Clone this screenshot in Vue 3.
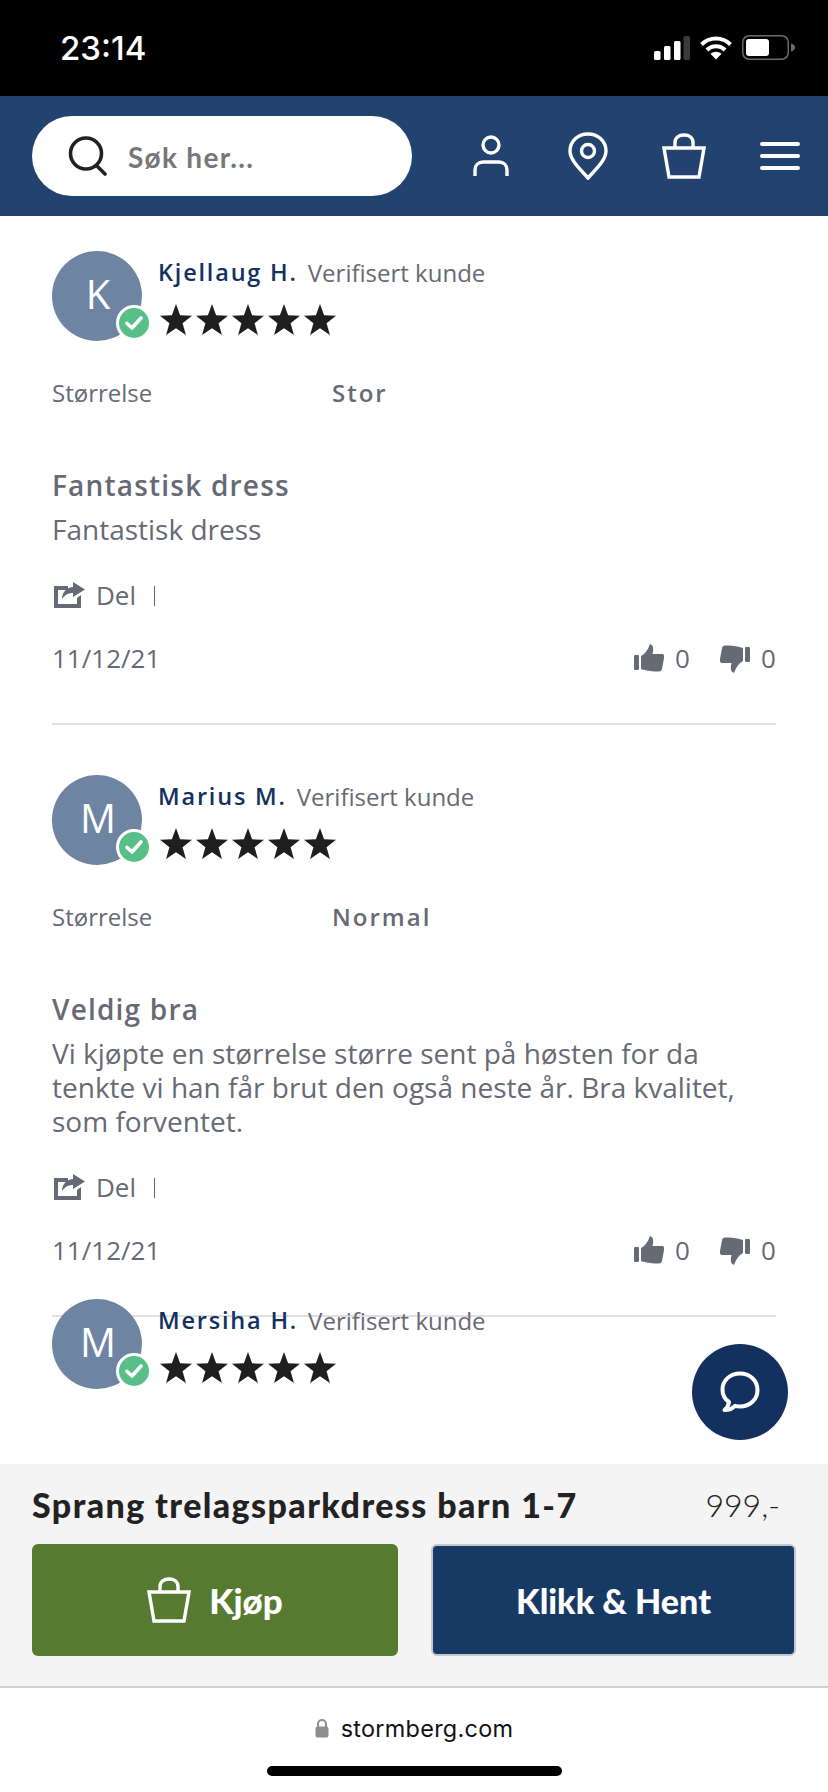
<script setup>
const reviews = [
  { initial: 'K', name: 'Kjellaug H.', size: 'Stor', title: 'Fantastisk dress', lines: ['Fantastisk dress'], full: true },
  { initial: 'M', name: 'Marius M.', size: 'Normal', title: 'Veldig bra', lines: ['Vi kjøpte en størrelse større sent på høsten for da', 'tenkte vi han får brut den også neste år. Bra kvalitet,', 'som forventet.'], full: true },
  { initial: 'M', name: 'Mersiha H.', full: false },
]
</script>

<template>
  <div class="phone">
    <header class="status">
      <span class="time">23:14</span>
      <div class="status-icons">
        <svg width="36" height="24" viewBox="0 0 36 24">
          <rect x="0" y="15" width="6.500" height="9" rx="1.500" fill="#fff" />
          <rect x="10" y="10" width="6.500" height="14" rx="1.500" fill="#fff" />
          <rect x="20" y="5" width="6.500" height="19" rx="1.500" fill="#fff" />
          <rect x="29.500" y="0" width="6.500" height="24" rx="1.500" fill="#3a3a3a" />
        </svg>
        <svg width="32" height="24" viewBox="0 0 32 24" fill="none" stroke="#fff" stroke-width="4">
          <path d="M1.500 8.500C9.500 .5 22.500 .5 30.500 8.500" />
          <path d="M7 14c5-5 13-5 18 0" />
          <path d="M16 23.500l-5.600-5.800c3.200-2.700 8-2.700 11.200 0z" fill="#fff" stroke="none" />
        </svg>
        <svg width="54" height="25" viewBox="0 0 54 25">
          <rect x=".75" y=".75" width="45.500" height="23.500" rx="6.500" fill="none" stroke="#6b6b6b" stroke-width="1.500" />
          <rect x="4" y="4" width="23" height="17" rx="3" fill="#fff" />
          <path d="M49 8.500c2.500.6 4 2 4 4s-1.500 3.400-4 4z" fill="#6b6b6b" />
        </svg>
      </div>
    </header>

    <nav class="nav">
      <div class="search">
        <svg class="search-icon" width="40" height="40" viewBox="0 0 40 40" fill="none" stroke="#222" stroke-width="3.600" stroke-linecap="round">
          <circle cx="18" cy="17.500" r="15.500" />
          <path d="M28.500 29.500l8.500 8.500" />
        </svg>
        <span class="search-text">Søk her...</span>
      </div>
      <div class="nav-icons">
        <svg class="person" width="36" height="42" viewBox="0 0 36 42" fill="none" stroke="#fff" stroke-width="3.400">
          <circle cx="18" cy="10" r="8" />
          <path d="M2 41V35c0-5 3.500-8 8-8h16c4.500 0 8 3 8 8v6" />
        </svg>
        <svg width="40" height="48" viewBox="0 0 40 48" fill="none" stroke="#fff" stroke-width="3.400">
          <path d="M20 46C12 37 2 28 2 19 2 9 10 2 20 2s18 7 18 17c0 9-10 18-18 27z" />
          <circle cx="20" cy="19" r="6.500" />
        </svg>
        <svg width="44" height="46" viewBox="0 0 44 46" fill="none" stroke="#fff" stroke-width="3.400">
          <path d="M13 15V9.500C13 5 16.500 2 22 2s9 3 9 7.500V15" />
          <path d="M2 15h40l-5 29H7z" />
        </svg>
        <div class="burger"><i></i><i></i><i></i></div>
      </div>
    </nav>

    <main class="reviews">
      <article v-for="(r, ri) in reviews" :key="ri" class="review">
        <div class="head">
          <div class="avatar">
            {{ r.initial }}
            <span class="badge">
              <svg width="20" height="16" viewBox="0 0 20 16" fill="none" stroke="#fff" stroke-width="3.600" stroke-linecap="round" stroke-linejoin="round">
                <path d="M3 8.500l5 4.500L17 3" />
              </svg>
            </span>
          </div>
          <div class="who">
            <div class="name-row">
              <span class="name">{{ r.name }}</span>
              <span class="verified">Verifisert kunde</span>
            </div>
            <div class="stars">
              <svg v-for="n in 5" :key="n" width="32" height="31" viewBox="0 0 32 31">
                <path d="M16 0l4.100 11.300L32 11.800l-9.400 7.400L25.900 31 16 24.200 6.100 31l3.300-11.800L0 11.800l11.900-.5z" fill="#1f1f1f" />
              </svg>
            </div>
          </div>
        </div>
        <template v-if="r.full">
          <div class="meta">
            <span class="meta-label">Størrelse</span>
            <span class="meta-value">{{ r.size }}</span>
          </div>
          <h3 class="title">{{ r.title }}</h3>
          <p class="body"><span v-for="(l, i) in r.lines" :key="i" class="line">{{ l }}</span></p>
          <div class="share">
            <svg width="31" height="26" viewBox="0 0 31 26">
              <path d="M0 4h14v4H4v14h19v-6l4-3v13H0z" fill="#666a75" />
              <path d="M19 0l12 7.500L19 15v-4c-5 0-8 2-11 6 0-7 5-11.500 11-12z" fill="#666a75" />
            </svg>
            <span class="del">Del</span>
            <span class="sep"></span>
          </div>
          <div class="foot">
            <span>11/12/21</span>
            <div class="votes">
              <svg width="30" height="28" viewBox="0 0 30 28" fill="#666a75">
                <rect x="0" y="11" width="5" height="15" rx="1" />
                <path d="M7 12c4-2 7-6 9-12 3 1 4 4 2.500 10H28c2 0 2.500 2 2 4l-2 11c-.4 1.500-1.500 2.500-3 2.500-6 0-12-.5-18-2.500z" />
              </svg>
              <span class="count">0</span>
              <svg class="down" width="30" height="28" viewBox="0 0 30 28" fill="#666a75">
                <rect x="25" y="2" width="5" height="15" rx="1" />
                <path d="M23 16c-4 2-7 6-9 12-3-1-4-4-2.500-10H2c-2 0-2.500-2-2-4L2 3C2.400 1.500 3.500.5 5 .5c6 0 12 .5 18 2.500z" />
              </svg>
              <span class="count">0</span>
            </div>
          </div>
          <hr class="rule" />
        </template>
      </article>
    </main>

    <button class="chat" aria-label="Chat">
      <svg width="40" height="42" viewBox="0 0 40 42" fill="none" stroke="#fff" stroke-width="4" stroke-linecap="round" stroke-linejoin="round">
        <path d="M9 31C4.500 28 2.500 23.500 2.500 18.500 2.500 9.500 10 2.500 20 2.500s17.500 7 17.500 16.500S30 35.500 20 35.500c-2 0-3.500-.2-5-.7C12.500 37.500 9 39 4.500 39 7 37 8.500 34.500 9 31z" />
      </svg>
    </button>

    <section class="buy">
      <div class="product">
        <span class="product-name">Sprang trelagsparkdress barn 1-7</span>
        <span class="price">999,-</span>
      </div>
      <div class="actions">
        <button class="btn green">
          <svg width="44" height="46" viewBox="0 0 44 46" fill="none" stroke="#fff" stroke-width="3.400">
            <path d="M13 15V9.500C13 5 16.500 2 22 2s9 3 9 7.500V15" />
            <path d="M2 15h40l-5 29H7z" />
          </svg>
          Kjøp
        </button>
        <button class="btn blue">Klikk &amp; Hent</button>
      </div>
    </section>

    <footer class="browser">
      <div class="url">
        <svg width="14" height="19" viewBox="0 0 14 19">
          <path d="M3 8V5a4 4 0 0 1 8 0v3" fill="none" stroke="#8e8e8e" stroke-width="2" />
          <rect x="0.500" y="7.500" width="13" height="11" rx="2" fill="#8e8e8e" />
        </svg>
        <span>stormberg.com</span>
      </div>
      <div class="home"></div>
    </footer>
  </div>
</template>

<style>
html, body { margin: 0; background: #fff; }
</style>

<style scoped>
.phone {
  position: relative;
  width: 828px;
  height: 1792px;
  overflow: hidden;
  display: flex;
  flex-direction: column;
  background: #fff;
  font-family: "Open Sans", sans-serif;
  color: #666a75;
}
.status {
  flex: none;
  height: 96px;
  background: #000;
  display: flex;
  align-items: center;
  justify-content: space-between;
  padding: 0 32px 0 60px;
  box-sizing: border-box;
}
.time {
  font-family: Inter, sans-serif;
  font-weight: 500;
  font-size: 33px;
  color: #fff;
}
.status-icons { display: flex; align-items: center; gap: 10px; margin-top: -1px; }
.status-icons svg { display: block; }
.nav {
  flex: none;
  height: 120px;
  background: #22426f;
  display: flex;
  align-items: center;
  padding: 0 28px 0 32px;
  box-sizing: border-box;
  justify-content: space-between;
}
.search {
  width: 380px;
  height: 80px;
  border-radius: 40px;
  background: #fff;
  display: flex;
  align-items: center;
  padding-left: 36px;
  box-sizing: border-box;
}
.search-icon { flex: none; }
.search-text {
  margin-left: 20px;
  margin-top: 2px;
  font-family: Lato, sans-serif;
  font-weight: 700;
  font-size: 28px;
  letter-spacing: 1.300px;
  color: #777;
}
.nav-icons { display: flex; align-items: center; gap: 54px; }
.nav-icons svg { display: block; }
.person { margin-right: 5px; }
.burger { width: 40px; display: flex; flex-direction: column; gap: 8px; }
.burger i { display: block; height: 4px; border-radius: 2px; background: #fff; }
.reviews {
  flex: 1;
  min-height: 0;
  overflow: hidden;
  padding: 35px 52px 0;
  box-sizing: border-box;
}
.review { height: 524px; }
.head { display: flex; height: 90px; }
.avatar {
  position: relative;
  width: 90px;
  height: 90px;
  border-radius: 50%;
  background: #6e84a3;
  color: #fff;
  font-size: 40px;
  line-height: 86px;
  text-indent: 2px;
  text-align: center;
  flex: none;
}
.badge {
  position: absolute;
  left: 64px;
  top: 54px;
  width: 30px;
  height: 30px;
  border: 3px solid #fff;
  border-radius: 50%;
  background: #58bf88;
  display: flex;
  align-items: center;
  justify-content: center;
  text-indent: 0;
}
.who { margin-left: 16px; padding-top: 4px; }
.name-row { display: flex; align-items: center; height: 34px; }
.name {
  font-weight: 600;
  font-size: 23.500px;
  letter-spacing: 1.800px;
  color: #13315f;
}
.verified { margin-left: 10px; font-size: 24px; color: #666a75; }
.stars { display: flex; gap: 4px; margin-top: 15px; margin-left: 2px; }
.stars svg { display: block; }
.meta { display: flex; margin-top: 34px; height: 34px; align-items: center; font-size: 24px; }
.meta-label { width: 280px; }
.meta-value { font-weight: 600; letter-spacing: 2px; }
.title {
  margin: 59px 0 0;
  font-size: 28px;
  line-height: 34px;
  font-weight: 600;
  letter-spacing: 1.200px;
  color: #666a75;
}
.body { margin: 10px 0 0; font-size: 28px; line-height: 34px; }
.line { display: block; white-space: nowrap; }
.share { display: flex; align-items: center; margin-top: 32px; height: 34px; padding-left: 2px; }
.share svg { display: block; }
.del { margin-left: 11px; font-size: 26px; }
.sep { margin-left: 18px; width: 1px; height: 20px; background: #666a75; margin-top: 2px; }
.foot { display: flex; justify-content: space-between; align-items: center; margin-top: 29px; height: 34px; font-size: 26px; }
.votes { display: flex; align-items: center; }
.votes svg { display: block; }
.count { margin-left: 11px; width: 15px; font-size: 26px; }
.down { margin-left: 30px; margin-top: 2px; }
.rule { margin: 48px 0 0; border: 0; height: 2px; background: #e0e0e0; }
.chat {
  position: absolute;
  left: 692px;
  top: 1344px;
  width: 96px;
  height: 96px;
  border: 0;
  padding: 0;
  border-radius: 50%;
  background: #13315f;
  display: flex;
  align-items: center;
  justify-content: center;
}
.buy {
  flex: none;
  height: 224px;
  background: #f4f4f4;
  border-bottom: 2px solid #cfcfcf;
  box-sizing: border-box;
  padding: 0 32px;
}
.product { display: flex; justify-content: space-between; align-items: center; height: 80px; padding-right: 16px; font-family: Lato, sans-serif; color: #222; }
.product-name { font-weight: 900; font-size: 34px; letter-spacing: 1.400px; }
.price { font-size: 32px; font-weight: 300; }
.actions { display: flex; gap: 33px; }
.btn {
  flex: none;
  height: 112px;
  border-radius: 6px;
  border: 0;
  display: flex;
  align-items: center;
  justify-content: center;
  color: #fff;
  font-family: Lato, sans-serif;
  font-weight: 900;
}
.green { width: 366px; background: #567b30; gap: 18px; font-size: 35px; }
.blue { width: 365px; background: #173a65; border: 2px solid #c4c8cc; box-sizing: border-box; font-size: 34px; }
.browser { flex: none; height: 104px; display: flex; flex-direction: column; align-items: center; }
.url { display: flex; align-items: center; gap: 12px; margin-top: 26px; color: #111; font-family: Inter, sans-serif; font-size: 23.400px; letter-spacing: .3px; height: 28px; }
.url svg { display: block; }
.home { width: 295px; height: 10px; border-radius: 5px; background: #000; margin-top: 24px; }
</style>
